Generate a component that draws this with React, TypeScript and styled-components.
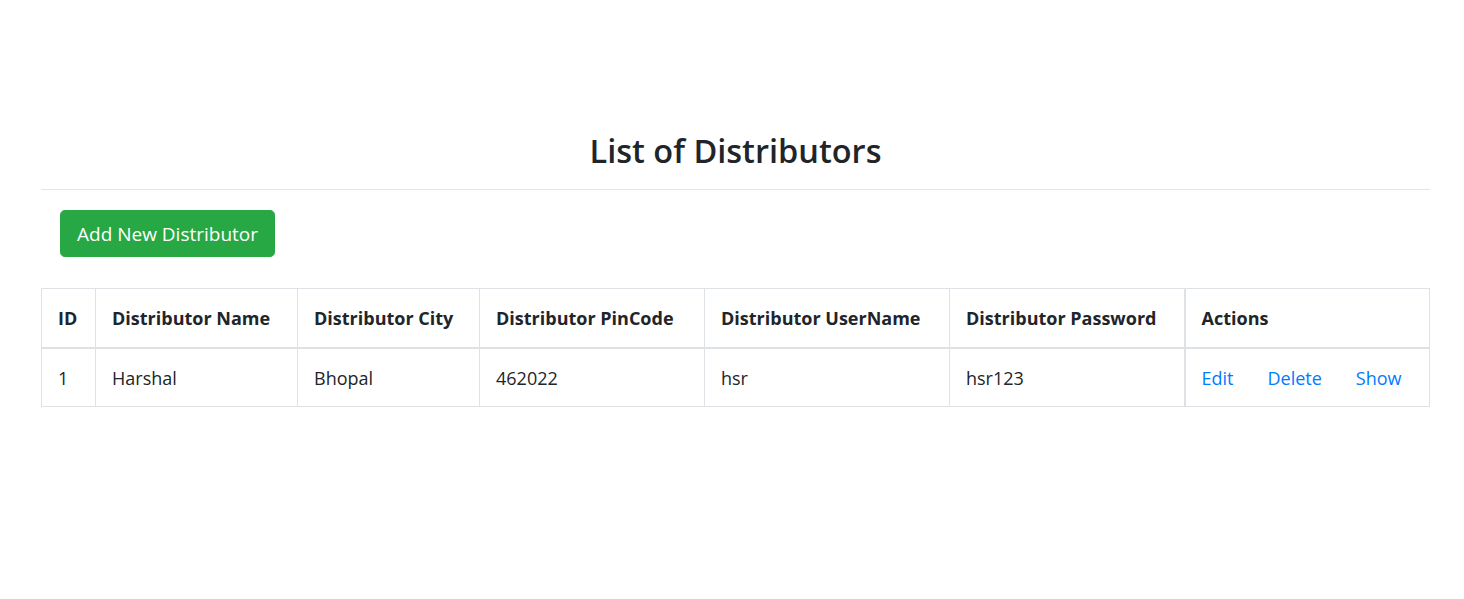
import { createGlobalStyle, styled } from 'styled-components'

type Distributor = {
  id: number
  name: string
  city: string
  pinCode: string
  userName: string
  password: string
}

const distributors: Distributor[] = [
  { id: 1, name: 'Harshal', city: 'Bhopal', pinCode: '462022', userName: 'hsr', password: 'hsr123' },
]

const columns = [
  { title: 'ID', width: 54 },
  { title: 'Distributor Name', width: 202 },
  { title: 'Distributor City', width: 182 },
  { title: 'Distributor PinCode', width: 225 },
  { title: 'Distributor UserName', width: 245 },
  { title: 'Distributor Password', width: 235 },
  { title: 'Actions', width: 245 },
]

export default function App() {
  return (
    <>
      <GlobalStyle />
      <Page>
        <Title>List of Distributors</Title>
        <Rule />
        <Toolbar>
          <AddButton type="button">Add New Distributor</AddButton>
        </Toolbar>
        <Table>
          <colgroup>
            {columns.map((c) => (
              <col key={c.title} style={{ width: c.width }} />
            ))}
          </colgroup>
          <thead>
            <tr>
              {columns.map((c, i) => (
                <Th key={c.title} $actions={i === columns.length - 1}>
                  {c.title}
                </Th>
              ))}
            </tr>
          </thead>
          <tbody>
            {distributors.map((d) => (
              <tr key={d.id}>
                <Td>{d.id}</Td>
                <Td>{d.name}</Td>
                <Td>{d.city}</Td>
                <Td>{d.pinCode}</Td>
                <Td>{d.userName}</Td>
                <Td>{d.password}</Td>
                <Td $actions>
                  <ActionLink href="#">Edit</ActionLink>
                  <ActionLink href="#">Delete</ActionLink>
                  <ActionLink href="#">Show</ActionLink>
                </Td>
              </tr>
            ))}
          </tbody>
        </Table>
      </Page>
    </>
  )
}

const GlobalStyle = createGlobalStyle`
  body {
    margin: 0;
    background: #fff;
    color: #212529;
    font-family: "Open Sans", "Noto Sans", sans-serif;
    font-size: 18px;
    line-height: 1.5;
  }
`

const Page = styled.div`
  margin: 0 34px 0 41px;
  padding-top: 131px;
`

const Title = styled.h2`
  margin: 0 0 19px;
  font-size: 32.5px;
  font-weight: 600;
  line-height: 1.2;
  text-align: center;
`

const Rule = styled.hr`
  margin: 0;
  border: 0;
  border-top: 1px solid rgba(0, 0, 0, 0.1);
`

const Toolbar = styled.div`
  padding: 20px 0 31px 19px;
`

const AddButton = styled.button`
  display: inline-block;
  height: 47px;
  padding: 8px 16px 6px;
  border: 1px solid #28a745;
  border-radius: 4.8px;
  background: #28a745;
  color: #fff;
  font-family: inherit;
  font-size: 19px;
  line-height: 1.5;
  cursor: pointer;
`

const Table = styled.table`
  width: 1388px;
  border-collapse: collapse;
  table-layout: fixed;
  border: 1px solid #dee2e6;
`

const Th = styled.th<{ $actions?: boolean }>`
  box-sizing: border-box;
  height: 59px;
  padding: 2px 16px 0;
  border: 1px solid #dee2e6;
  border-bottom-width: 2px;
  border-left-width: ${(p) => (p.$actions ? '2px' : '1px')};
  text-align: left;
  font-weight: 700;
  white-space: nowrap;
`

const Td = styled.td<{ $actions?: boolean }>`
  box-sizing: border-box;
  height: 59px;
  padding: 2px 16px 0;
  border: 1px solid #dee2e6;
  border-left-width: ${(p) => (p.$actions ? '2px' : '1px')};
  white-space: nowrap;
`

const ActionLink = styled.a`
  margin-right: 34px;
  color: #007bff;
  text-decoration: none;

  &:last-child {
    margin-right: 0;
  }
`
